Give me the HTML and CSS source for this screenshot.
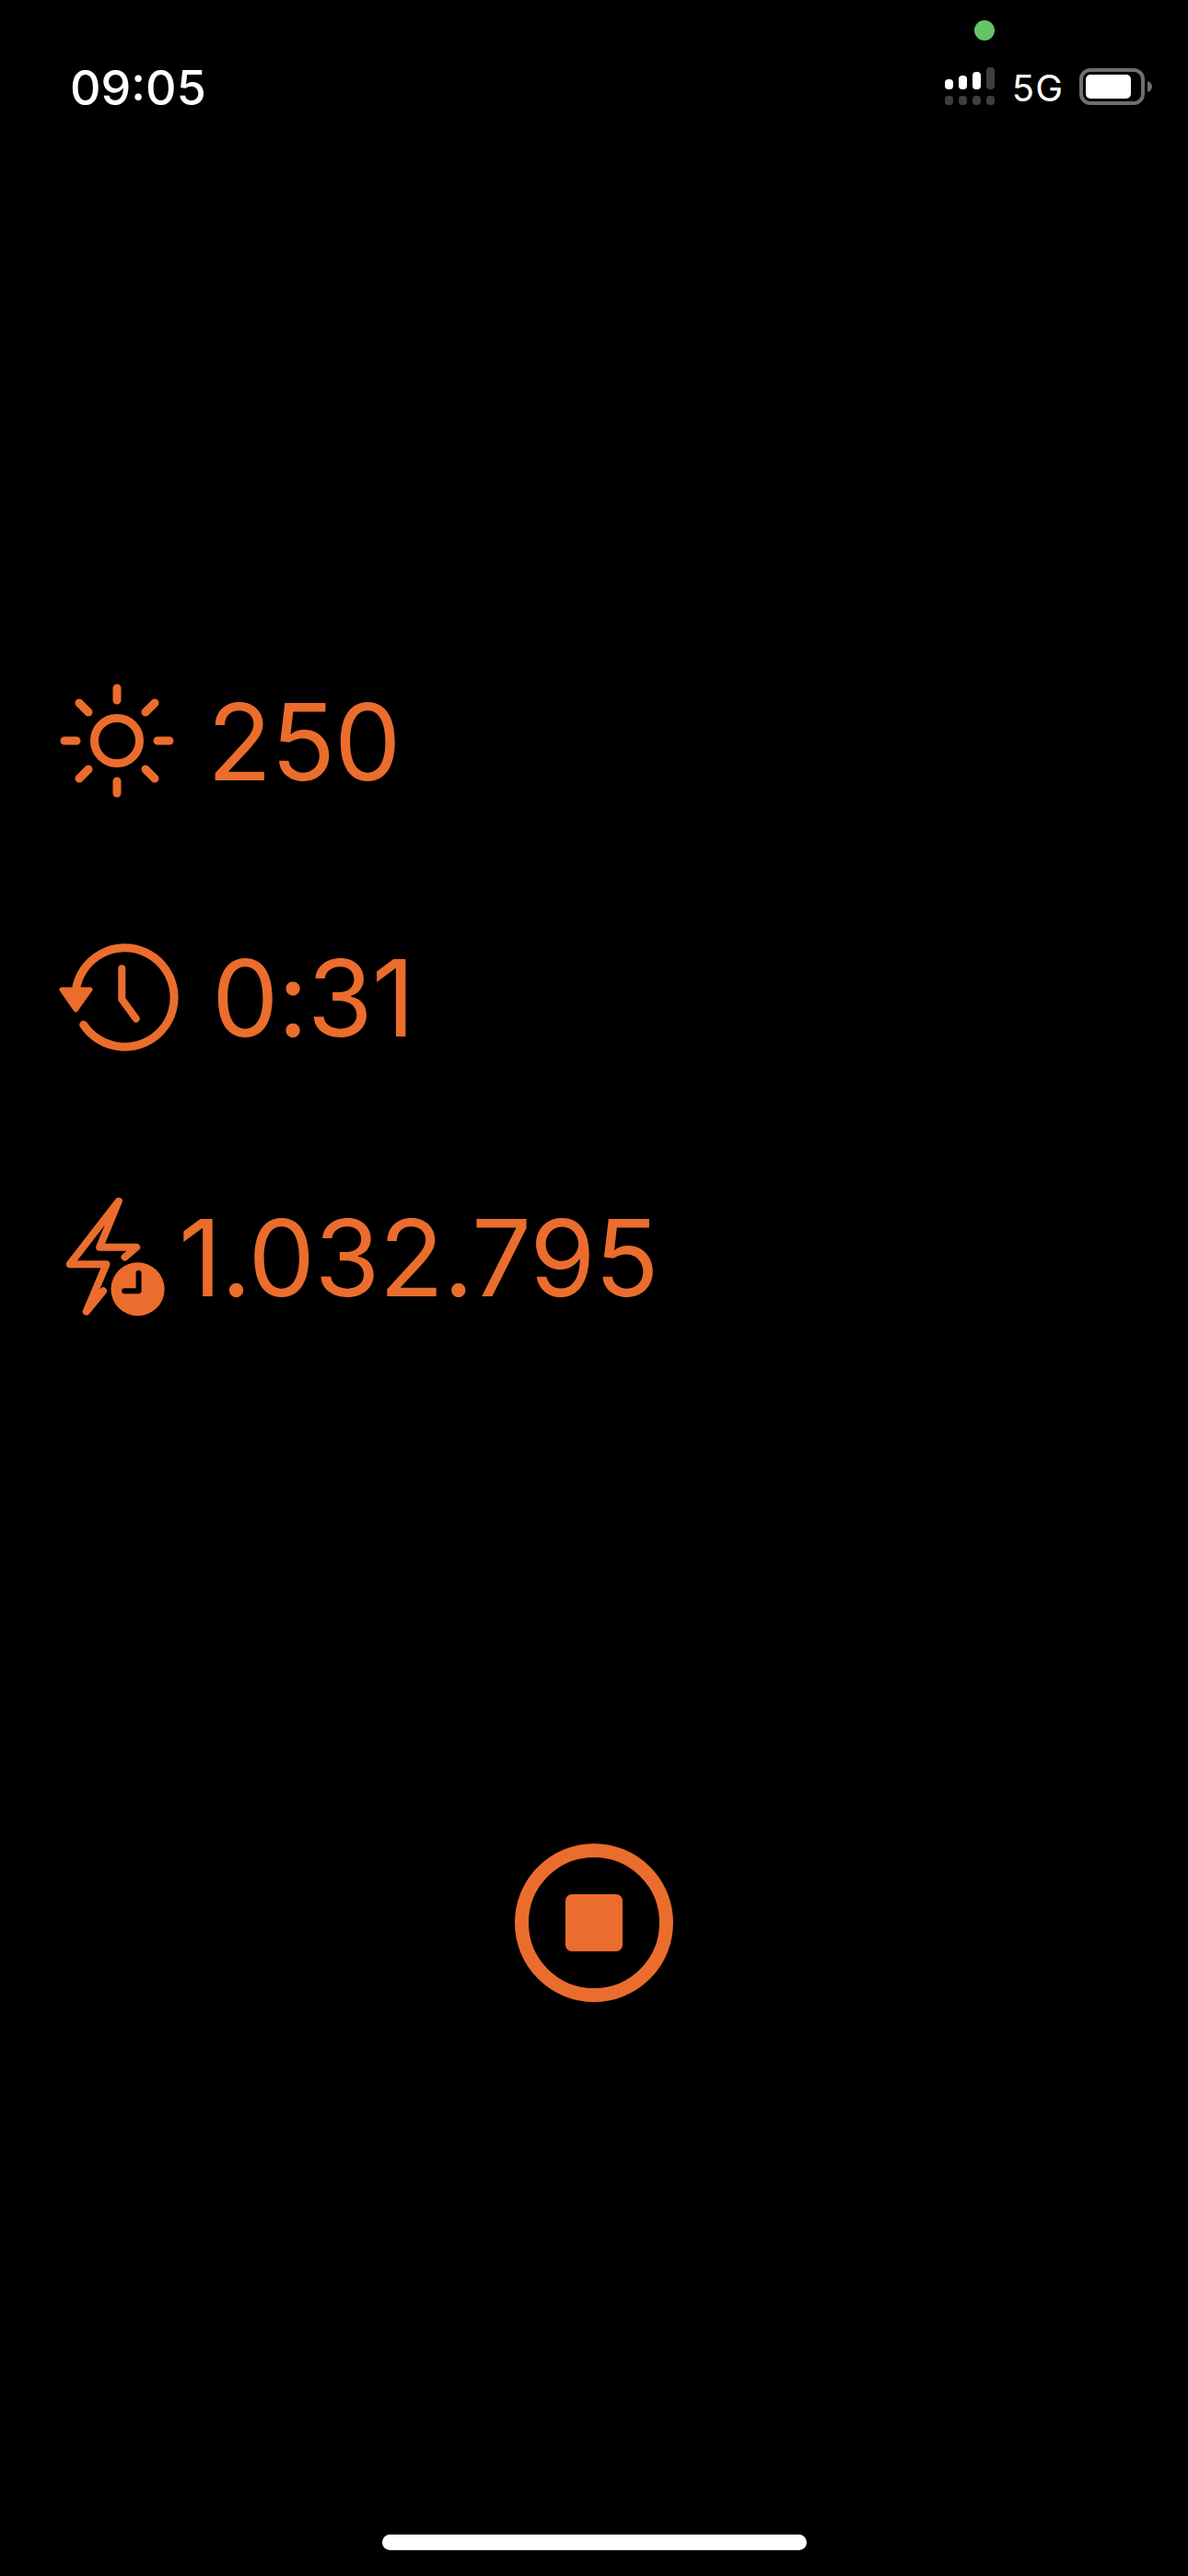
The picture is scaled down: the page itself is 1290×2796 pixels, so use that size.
FILE: index.html
```html
<!DOCTYPE html>
<html lang="en">
<head>
    <meta charset="UTF-8">
    <meta name="viewport" content="width=device-width, initial-scale=1.0">
    <title>Workout</title>
    <link rel="stylesheet" href="styles.css">
</head>
<body>
    <div class="screen">
        <header class="status">
            <span class="time">09:05</span>
            <div class="status-right">
                <span class="mic-dot"></span>
                <svg class="signal" width="56" height="42" viewBox="0 0 56 42">
                    <rect x="0" y="13" width="9" height="11" rx="4" fill="#fff"/>
                    <rect x="15" y="9" width="9" height="15" rx="4" fill="#fff"/>
                    <rect x="30" y="5" width="9" height="19" rx="4" fill="#fff"/>
                    <rect x="45" y="0" width="9" height="24" rx="4" fill="#3f3f3f"/>
                    <rect x="0" y="31" width="9" height="10" rx="4" fill="#3f3f3f"/>
                    <rect x="15" y="31" width="9" height="10" rx="4" fill="#3f3f3f"/>
                    <rect x="30" y="31" width="9" height="10" rx="4" fill="#3f3f3f"/>
                    <rect x="45" y="31" width="9" height="10" rx="4" fill="#3f3f3f"/>
                </svg>
                <span class="network">5G</span>
                <svg class="battery" width="79" height="40" viewBox="0 0 79 40">
                    <rect x="2" y="2" width="67" height="36" rx="10" fill="none" stroke="#6f6f6f" stroke-width="4"/>
                    <rect x="7" y="7" width="49" height="26" rx="5" fill="#fff"/>
                    <path d="M74 14c3 1 5 3 5 6s-2 5-5 6z" fill="#6f6f6f"/>
                </svg>
            </div>
        </header>

        <main class="stats">
            <div class="row row-power">
                <svg class="icon" width="124" height="124" viewBox="-62 -62 124 124" fill="none" stroke="#eb6d2d" stroke-width="9" stroke-linecap="round">
                    <circle r="24.5"/>
                    <path d="M0-57V-44M0 44V57M-57 0H-44M44 0H57M-41-41L-31-31M41-41L31-31M-41 41L-31 31M41 41L31 31"/>
                </svg>
                <span class="value">250</span>
            </div>
            <div class="row row-time">
                <svg class="icon" width="132" height="120" viewBox="-72 -60 132 120" fill="none" stroke="#eb6d2d" stroke-width="9" stroke-linecap="round" stroke-linejoin="round">
                    <path d="M-44.3 30.3A53.7 53.7 0 1 0-52.7-7.3"/>
                    <path d="M-68-8H-37L-52.7 14Z" fill="#eb6d2d" stroke-width="5"/>
                    <path d="M-2.7-30.7V2.7L12.7 23.7" stroke-width="8"/>
                </svg>
                <span class="value">0:31</span>
            </div>
            <div class="row row-energy">
                <svg class="icon" width="107" height="129" viewBox="95 65 320 386" fill="none" stroke="#eb6d2d" stroke-width="24" stroke-linecap="round" stroke-linejoin="round">
                    <path d="M285 258L323 226H203L265 76L106 281H225L160 435L215 368"/>
                    <circle cx="327" cy="362" r="100" fill="#000" stroke="none"/>
                    <circle cx="327" cy="362" r="87" fill="#eb6d2d" stroke="none"/>
                    <path d="M330 310V368H284" stroke="#000" stroke-width="18"/>
                </svg>
                <span class="value value-long">1.032.795</span>
            </div>
        </main>

        <div class="controls">
            <button class="stop" type="button"><span class="stop-square"></span></button>
        </div>

        <div class="home-bar"></div>
    </div>
</body>
</html>
```

FILE: styles.css
```css
body {
    margin: 0;
    padding: 0;
    background-color: #000;
    font-family: Inter, "Liberation Sans", sans-serif;
}

.screen {
    position: relative;
    width: 1290px;
    height: 2796px;
    overflow: hidden;
    background-color: #000;
}

/* Status bar */
.status {
    display: flex;
    justify-content: space-between;
    align-items: center;
    height: 40px;
    padding: 76px 39px 0 76px;
}

.time {
    color: #fff;
    font-size: 52px;
    font-weight: 500;
    line-height: 40px;
}

.status-right {
    position: relative;
    display: flex;
    align-items: center;
    padding-bottom: 4px;
}

.mic-dot {
    position: absolute;
    left: 32px;
    top: -51px;
    width: 22px;
    height: 22px;
    border-radius: 50%;
    background-color: #65c466;
}

.signal {
    margin-right: 17px;
}

.network {
    margin-right: 17px;
    padding-top: 3px;
    color: #fff;
    font-size: 40px;
    line-height: 40px;
    letter-spacing: 1px;
}

/* Stats */
.stats {
    padding-top: 608px;
}

.row {
    display: flex;
    align-items: center;
    height: 160px;
}

.value {
    padding-top: 3px;
    color: #eb6d2d;
    font-size: 115px;
    font-weight: 400;
    line-height: 154px;
    letter-spacing: -1px;
}

.value-long {
    letter-spacing: -0.7px;
}

.row-power {
    padding-left: 65px;
}

.row-power .icon {
    margin-right: 36px;
}

.row-time {
    margin-top: 118px;
    padding-left: 63px;
}

.row-time .icon {
    margin-right: 35px;
}

.row-energy {
    margin-top: 122px;
    padding-left: 72px;
}

.row-energy .icon {
    margin-right: 15px;
}

/* Stop button */
.controls {
    display: flex;
    justify-content: center;
    padding-top: 557px;
}

.stop {
    display: flex;
    justify-content: center;
    align-items: center;
    width: 172px;
    height: 172px;
    padding: 0;
    border: 15px solid #eb6d2d;
    border-radius: 50%;
    background: none;
}

.stop-square {
    width: 62px;
    height: 62px;
    border-radius: 7px;
    background-color: #eb6d2d;
}

.home-bar {
    position: absolute;
    left: 415px;
    bottom: 28px;
    width: 461px;
    height: 17px;
    border-radius: 9px;
    background-color: #fff;
}
```
